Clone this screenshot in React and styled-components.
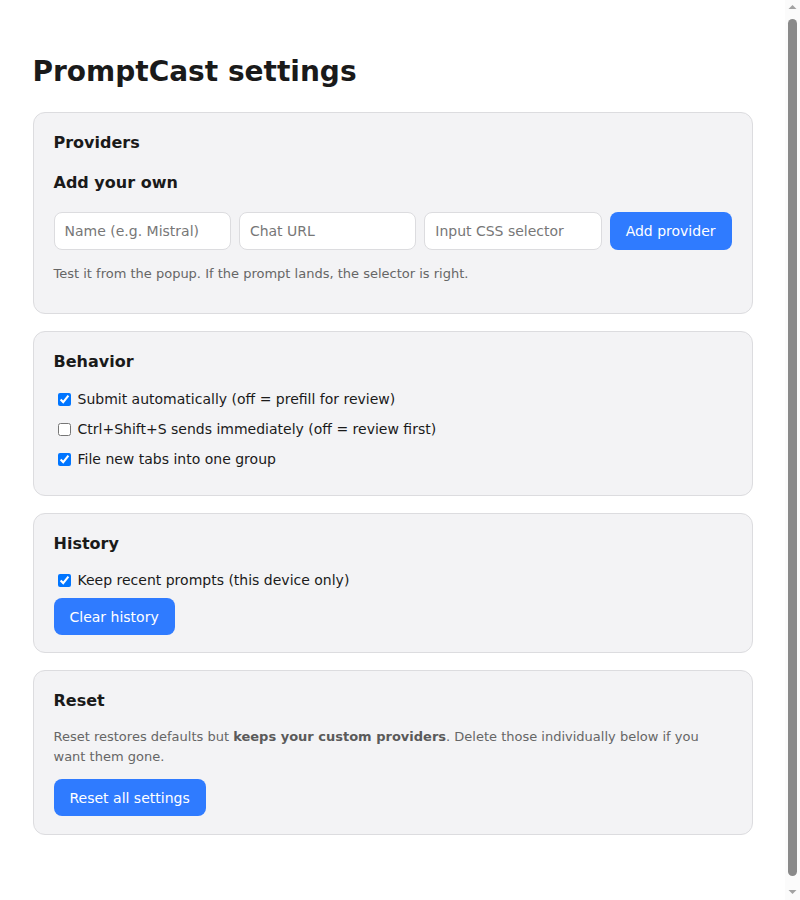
import React from "react";
import styled, { createGlobalStyle } from "styled-components";

const GlobalStyle = createGlobalStyle`
  html, body { margin: 0; padding: 0; background: #ffffff; }
  body {
    font-family: "DejaVu Sans", "Noto Sans", sans-serif;
    color: #1a1a1a;
    padding-right: 15px;
  }
  * { box-sizing: border-box; }
`;

/* Decorative browser-style scrollbar drawn over the right edge */
const ScrollRail = styled.div`
  position: fixed;
  top: 0;
  right: 0;
  width: 15px;
  height: 100vh;
  background: #fbfbfb;
  display: flex;
  flex-direction: column;
  align-items: center;
  justify-content: space-between;
  padding: 4px 0 5px;
`;

const ScrollThumb = styled.div`
  flex: 1;
  width: 9px;
  margin: 9px 0 13px;
  border-radius: 5px;
  background: #8a8a8a;
`;

const Arrow = ({ down }) => (
  <svg width="9" height="6" viewBox="0 0 9 6">
    <polygon points={down ? "0.5,1 8.5,1 4.5,5" : "0.5,5 8.5,5 4.5,1"} fill="#a3a3a3" />
  </svg>
);

const Page = styled.main`
  max-width: 720px;
  margin: 0 auto;
  padding: 32px 0 68px;
`;

const Title = styled.h1`
  font-size: 28px;
  font-weight: 700;
  line-height: 34px;
  margin: 23px 0 23px;
  color: #1a1a1a;
`;

const Card = styled.section`
  background: #f3f3f5;
  border: 1px solid #dcdcdf;
  border-radius: 12px;
  padding: 20px 20px ${(p) => p.$pb ?? 18}px;
  margin-bottom: 17px;
`;

const CardTitle = styled.h2`
  font-size: 16px;
  font-weight: 700;
  line-height: 20px;
  margin: 0 0 ${(p) => p.$mb ?? 14}px;
`;

const SubTitle = styled.h3`
  font-size: 16px;
  font-weight: 700;
  line-height: 20px;
  margin: 20px 0 19px;
`;

const InputRow = styled.div`
  display: flex;
  gap: 8px;
  align-items: stretch;
`;

const TextInput = styled.input`
  flex: 1;
  min-width: 0;
  height: 38px;
  padding: 0 10px;
  border: 1px solid #dcdcdf;
  border-radius: 8px;
  background: #fff;
  font-family: inherit;
  font-size: 14px;
  color: #1a1a1a;
  &::placeholder { color: #777; }
`;

const Button = styled.button`
  background: #2f7bff;
  color: #fff;
  border: none;
  border-radius: 8px;
  font-family: inherit;
  font-size: 14px;
  padding: 0 16px;
  height: ${(p) => p.$h ?? 37}px;
  margin-top: ${(p) => p.$mt ?? 0}px;
  cursor: pointer;
  white-space: nowrap;
`;

const Hint = styled.p`
  font-size: 13px;
  line-height: 20px;
  color: #666;
  margin: ${(p) => p.$m ?? "14px 0 11px"};
  b { font-weight: 700; color: #5a5a5a; }
`;

const CheckRow = styled.label`
  display: flex;
  align-items: center;
  height: 26px;
  margin-bottom: 4px;
  font-size: 14px;
  color: #1a1a1a;
  input { margin: 0 7px 0 4px; width: 13px; height: 13px; }
`;

const CheckList = styled.div`
  display: flex;
  flex-direction: column;
  padding-bottom: ${(p) => p.$pb ?? 0}px;
`;

export default function App() {
  return (
    <>
      <GlobalStyle />
      <Page>
        <Title>PromptCast settings</Title>

        <Card>
          <CardTitle $mb={0}>Providers</CardTitle>
          <SubTitle>Add your own</SubTitle>
          <InputRow>
            <TextInput placeholder="Name (e.g. Mistral)" />
            <TextInput placeholder="Chat URL" />
            <TextInput placeholder="Input CSS selector" />
            <Button $h={38}>Add provider</Button>
          </InputRow>
          <Hint>Test it from the popup. If the prompt lands, the selector is right.</Hint>
        </Card>

        <Card>
          <CardTitle>Behavior</CardTitle>
          <CheckList $pb={1}>
            <CheckRow>
              <input type="checkbox" defaultChecked />
              Submit automatically (off = prefill for review)
            </CheckRow>
            <CheckRow>
              <input type="checkbox" />
              Ctrl+Shift+S sends immediately (off = review first)
            </CheckRow>
            <CheckRow>
              <input type="checkbox" defaultChecked />
              File new tabs into one group
            </CheckRow>
          </CheckList>
        </Card>

        <Card $pb={17}>
          <CardTitle $mb={13}>History</CardTitle>
          <CheckList>
            <CheckRow>
              <input type="checkbox" defaultChecked />
              Keep recent prompts (this device only)
            </CheckRow>
          </CheckList>
          <Button $mt={1}>Clear history</Button>
        </Card>

        <Card>
          <CardTitle $mb={0}>Reset</CardTitle>
          <Hint $m="16px 0 12px">
            Reset restores defaults but <b>keeps your custom providers</b>. Delete those individually below if you want them gone.
          </Hint>
          <Button>Reset all settings</Button>
        </Card>
      </Page>
      <ScrollRail aria-hidden="true">
        <Arrow />
        <ScrollThumb />
        <Arrow down />
      </ScrollRail>
    </>
  );
}
